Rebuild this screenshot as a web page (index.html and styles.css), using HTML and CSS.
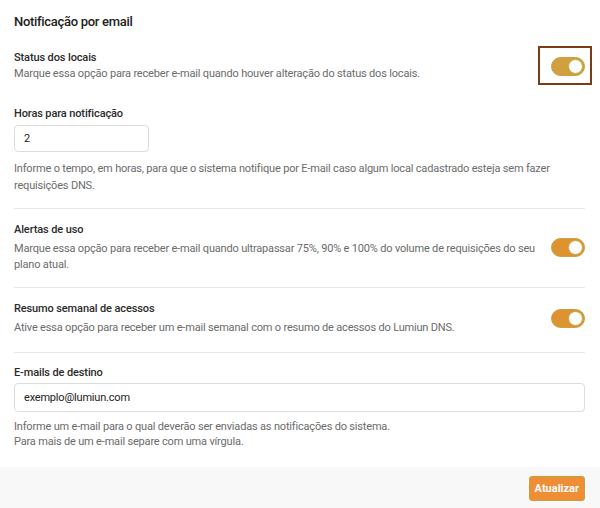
FILE: index.html
```html
<!DOCTYPE html>
<html lang="pt-BR">
<head>
    <meta charset="UTF-8">
    <title>Notificação por email</title>
    <link rel="stylesheet" href="styles.css">
</head>
<body>
    <form class="panel">
        <h2 class="title">Notificação por email</h2>

        <!-- status dos locais + horas -->
        <div class="section first">
            <div class="row">
                <div class="text">
                    <p class="label">Status dos locais</p>
                    <p class="desc">Marque essa opção para receber e-mail quando houver alteração do status dos locais.</p>
                </div>
                <label class="switch focused"><input type="checkbox" checked><span class="track"></span></label>
            </div>

            <p class="label field-label">Horas para notificação</p>
            <input type="text" class="input small" value="2">
            <p class="desc help">Informe o tempo, em horas, para que o sistema notifique por E-mail caso algum local cadastrado esteja sem fazer requisições DNS.</p>
        </div>

        <div class="section">
            <div class="row">
                <div class="text">
                    <p class="label">Alertas de uso</p>
                    <p class="desc">Marque essa opção para receber e-mail quando ultrapassar 75%, 90% e 100% do volume de requisições do seu plano atual.</p>
                </div>
                <label class="switch"><input type="checkbox" checked><span class="track"></span></label>
            </div>
        </div>

        <div class="section resumo">
            <div class="row">
                <div class="text">
                    <p class="label">Resumo semanal de acessos</p>
                    <p class="desc">Ative essa opção para receber um e-mail semanal com o resumo de acessos do Lumiun DNS.</p>
                </div>
                <label class="switch"><input type="checkbox" checked><span class="track"></span></label>
            </div>
        </div>

        <div class="section last">
            <p class="label field-label">E-mails de destino</p>
            <input type="text" class="input" value="exemplo@lumiun.com">
            <p class="desc help">Informe um e-mail para o qual deverão ser enviadas as notificações do sistema.<br>Para mais de um e-mail separe com uma vírgula.</p>
        </div>
    </form>

    <div class="footer">
        <button type="button" class="btn">Atualizar</button>
    </div>
</body>
</html>
```

FILE: styles.css
```css
body {
    margin: 0;
    font-family: Roboto, "Liberation Sans", Arial, sans-serif;
    background-color: #ffffff;
    color: #333;
}

.panel {
    padding: 12px 15px 0 14px;
}

.title {
    margin: 0;
    font-size: 13px;
    line-height: 20px;
    font-weight: 500;
    letter-spacing: -0.3px;
    color: #222;
}

p {
    margin: 0;
}

.section {
    padding: 13px 0 14px 0;
    border-bottom: 1px solid #e8e8e8;
}

.section.first {
    padding-top: 18px;
    padding-bottom: 14px;
}

.section.resumo {
    padding-bottom: 16px;
}

.section.last {
    border-bottom: none;
    padding-top: 12px;
    padding-bottom: 18px;
}

.row {
    display: flex;
    align-items: center;
    justify-content: space-between;
    gap: 10px;
}

.label {
    font-size: 11px;
    line-height: 16px;
    font-weight: 500;
    letter-spacing: -0.12px;
    color: #2b2b2b;
}

.desc {
    font-size: 11px;
    line-height: 16px;
    letter-spacing: -0.18px;
    color: #6b6b6b;
}

.text .desc {
    margin-top: 3px;
}

.first .text .desc {
    margin-top: 0;
}

.field-label {
    margin-top: 24px;
}

.section.last .field-label {
    margin-top: 0;
}

.input {
    display: block;
    box-sizing: border-box;
    width: 100%;
    height: 29px;
    margin-top: 2px;
    padding: 0 9px;
    border: 1px solid #dcdcdc;
    border-radius: 4px;
    font-family: inherit;
    font-size: 11px;
    letter-spacing: -0.2px;
    color: #222;
}

.input.small {
    width: 135px;
    height: 27px;
    margin-top: 3px;
}

.help {
    margin-top: 8px;
    line-height: 17px;
}

.section.last .help {
    margin-top: 7px;
    line-height: 15px;
}

/* toggle */
.switch {
    position: relative;
    flex: none;
    display: block;
    width: 34px;
    height: 19px;
}

.switch input {
    display: none;
}

.track {
    display: block;
    box-sizing: border-box;
    width: 34px;
    height: 19px;
    border-radius: 10px;
    background-color: #dd9330;
    border: 1px solid #c9a13e;
    position: relative;
}

.track::after {
    content: "";
    position: absolute;
    top: 1px;
    right: 1px;
    width: 15px;
    height: 15px;
    box-sizing: border-box;
    border-radius: 50%;
    background-color: #ffffff;
    border: 1px solid #c9a13e;
}

.switch.focused .track {
    background-color: #d0a03e;
}

.switch.focused::after {
    content: "";
    position: absolute;
    left: -13px;
    right: -7px;
    top: -11px;
    bottom: -9px;
    border: 2px solid #7a3c14;
}

.footer {
    display: flex;
    justify-content: flex-end;
    padding: 9px 15px 8px 0;
    background-color: #f9f8f8;
}

.btn {
    height: 25px;
    padding: 0 5px;
    background-color: #f08e36;
    border: 1px solid #c2a23f;
    border-radius: 3px;
    color: #ffffff;
    font-family: inherit;
    font-size: 11px;
    font-weight: 700;
    cursor: pointer;
}
```
